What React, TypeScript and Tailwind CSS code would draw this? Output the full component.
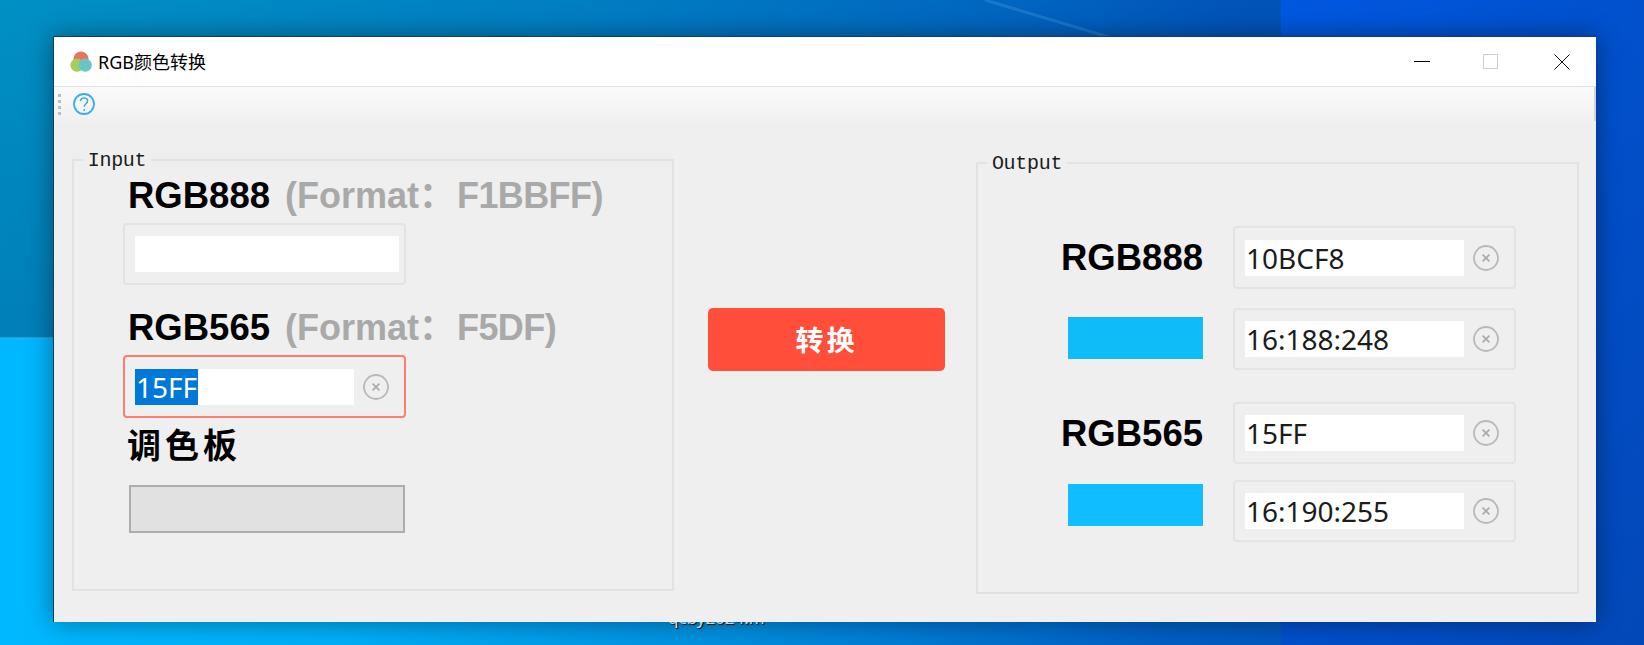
const sans = "font-['Liberation_Sans','Noto_Sans_CJK_SC',sans-serif]";
const ui = "font-['Noto_Sans','Noto_Sans_CJK_SC',sans-serif]";

function Clear() {
  return (
    <svg width="26" height="26" viewBox="0 0 26 26" className="shrink-0" fill="none">
      <circle cx="13" cy="13" r="12" stroke="#b9b9b9" strokeWidth="1.8" />
      <path d="M9.6 9.6l6.8 6.8M16.4 9.6l-6.8 6.8" stroke="#a9a9a9" strokeWidth="1.6" />
    </svg>
  );
}

function Field({
  value,
  clear = true,
  focused = false,
  selected = false,
  className = "",
}: {
  value?: string;
  clear?: boolean;
  focused?: boolean;
  selected?: boolean;
  className?: string;
}) {
  return (
    <div
      className={`flex w-[283px] items-center gap-[9px] rounded-[4px] border-2 pl-[10px] ${
        focused ? "border-[#ff7d70]" : "border-[#e3e3e3]"
      } ${className}`}
    >
      <div
        className={`flex h-[36px] ${clear ? "w-[219px]" : "w-[264px]"} shrink-0 items-center bg-white text-[28px] leading-[36px] text-[#1c1c1c] ${ui}`}
      >
        {selected ? <span className="bg-[#0078d7] pl-[1px] pr-[1px] text-white">{value}</span> : <span className="pl-[1px]">{value}</span>}
      </div>
      {clear && <Clear />}
    </div>
  );
}

function FormatLabel({ name, format }: { name: string; format: string }) {
  return (
    <div className={`ml-[5px] h-[40px] whitespace-nowrap text-[36px] font-bold leading-[40px] ${sans}`}>
      <span className="text-[36.5px] text-black">{name}</span>
      <span className="ml-[15px] text-[#a9a9a9]">
        (Format：<span className="ml-[2px] tracking-[-0.6px]">{format})</span>
      </span>
    </div>
  );
}

function Legend({ text, className }: { text: string; className: string }) {
  return (
    <div
      className={`absolute bg-[#efefef] text-center text-[20px] leading-[22px] tracking-[-0.3px] text-[#1c1c1c] font-['Liberation_Mono',monospace] ${className}`}
    >
      {text}
    </div>
  );
}

function OutLabel({ text, className = "" }: { text: string; className?: string }) {
  return <div className={`text-right text-[36.5px] font-bold leading-[40px] text-black ${sans} ${className}`}>{text}</div>;
}

function Wallpaper() {
  return (
    <svg className="absolute inset-0" width="1644" height="645" viewBox="0 0 1644 645" preserveAspectRatio="none">
      <defs>
        <linearGradient id="a" x1="0" y1="0" x2="1" y2="0.12">
          <stop offset="0" stopColor="#0090c4" />
          <stop offset="0.35" stopColor="#007ec2" />
          <stop offset="0.62" stopColor="#0064c0" />
          <stop offset="0.74" stopColor="#0254b8" />
          <stop offset="1" stopColor="#0348b0" />
        </linearGradient>
        <linearGradient id="d" x1="0" y1="0" x2="0" y2="1">
          <stop offset="0" stopColor="#006ea8" stopOpacity="0" />
          <stop offset="1" stopColor="#006ea8" stopOpacity="0.45" />
        </linearGradient>
        <linearGradient id="b" x1="0" y1="0" x2="1" y2="0">
          <stop offset="0" stopColor="#00b8ff" />
          <stop offset="0.2" stopColor="#00b0f8" />
          <stop offset="0.45" stopColor="#008ede" />
          <stop offset="0.7" stopColor="#0060c4" />
          <stop offset="1" stopColor="#0844ac" />
        </linearGradient>
        <linearGradient id="c" x1="0" y1="0" x2="1" y2="1">
          <stop offset="0" stopColor="#0058e0" />
          <stop offset="1" stopColor="#0348b8" />
        </linearGradient>
      </defs>
      <rect width="1644" height="645" fill="url(#a)" />
      <rect width="60" height="338" fill="url(#d)" />
      <rect y="338" width="1644" height="307" fill="url(#b)" />
      <rect y="337.5" width="60" height="1" fill="#2cbcf0" />
      <rect x="1281" width="363" height="645" fill="url(#c)" />
      <path d="M985 0L1112 38" stroke="#3a8fd6" strokeOpacity="0.45" strokeWidth="3" />
    </svg>
  );
}

function AppIcon() {
  return (
    <svg width="22" height="22" viewBox="0 0 22 22" className="shrink-0">
      <circle cx="11" cy="8" r="7.6" fill="#e8745e" />
      <circle cx="7" cy="14.2" r="6.6" fill="#a6cd58" />
      <circle cx="15.2" cy="14.2" r="6.6" fill="#69c4c9" />
    </svg>
  );
}

function HelpIcon() {
  return (
    <svg width="24" height="24" viewBox="0 0 24 24" fill="none" className="shrink-0">
      <circle cx="12" cy="12" r="10" stroke="#38ade8" strokeWidth="1.8" />
      <path d="M8.4 9.2c.2-2 1.8-3.2 3.6-3.2 2 0 3.6 1.3 3.6 3.1 0 2.6-3.2 2.7-3.4 5.7" stroke="#38ade8" strokeWidth="1.6" />
      <circle cx="12.2" cy="18" r="1.1" fill="#38ade8" />
    </svg>
  );
}

export default function App() {
  return (
    <div className="relative h-[645px] w-[1644px] overflow-hidden">
      <Wallpaper />
      <div className="absolute left-[668px] top-[608px] text-[17px] leading-[20px] text-white [text-shadow:1px_1px_1px_#000] font-['Noto_Sans',sans-serif]">
        qcby2024.m
      </div>
      <div className="relative ml-[53px] flex h-[586px] w-[1543px] translate-y-[36px] flex-col bg-[#efefef] shadow-[0_0_24px_rgba(0,0,0,0.4)] border-l border-t border-[#123f60]">
        <div className="absolute right-0 top-[50px] h-[34px] w-[2px] bg-[#d4d4d4]" />
        <div className="flex h-[49px] shrink-0 items-center bg-white">
          <div className="ml-[16px] flex items-center gap-[6px]">
            <AppIcon />
            <span className={`text-[18px] leading-[24px] text-black ${ui}`}>RGB颜色转换</span>
          </div>
          <div className="ml-auto flex items-center">
            <div className="h-[1px] w-[16px] bg-black" />
            <div className="ml-[53px] h-[15px] w-[15px] border border-[#cfcfcf]" />
            <svg width="16" height="16" viewBox="0 0 16 16" className="ml-[56px] mr-[26px]">
              <path d="M0.5 0.5l15 15M15.5 0.5l-15 15" stroke="#111" strokeWidth="1" />
            </svg>
          </div>
        </div>
        <div className="flex h-[39px] shrink-0 items-center border-t border-[#e2e2e2] bg-gradient-to-b from-[#fbfbfb] to-[#efefef] pb-[4px] pl-[4px]">
          <div className="flex flex-col gap-[3px]">
            <div className="h-[3px] w-[3px] bg-[#bdbdbd]" />
            <div className="h-[3px] w-[3px] bg-[#bdbdbd]" />
            <div className="h-[3px] w-[3px] bg-[#bdbdbd]" />
            <div className="h-[3px] w-[3px] bg-[#bdbdbd]" />
          </div>
          <div className="ml-[11px]">
            <HelpIcon />
          </div>
        </div>
        <div className="flex flex-1 items-start pl-[18px]">
          <div className="relative mt-[34px] h-[432px] w-[602px] shrink-0 border-2 border-[#e2e2e2] pl-[49px] pt-[15px]">
            <Legend text="Input" className="left-[9px] top-[-11px] w-[68px]" />
            <FormatLabel name="RGB888" format="F1BBFF" />
            <Field clear={false} className="mt-[7px] h-[62px]" />
            <div className="mt-[23px]">
              <FormatLabel name="RGB565" format="F5DF" />
            </div>
            <Field value="15FF" focused selected className="mt-[7px] h-[63px]" />
            <div className={`ml-[4px] mt-[6px] text-[34px] font-bold leading-[44px] tracking-[4px] text-black ${sans}`}>调色板</div>
            <div className="ml-[6px] mt-[17px] h-[48px] w-[276px] border-2 border-[#adadad] bg-[#e1e1e1]" />
          </div>
          <button
            className={`ml-[34px] mt-[183px] flex h-[63px] w-[237px] shrink-0 items-center justify-center rounded-[5px] bg-[#ff4f3b] pt-[4px] text-[28px] font-bold tracking-[3px] text-white ${sans}`}
          >
            转换
          </button>
          <div className="relative ml-[31px] mt-[37px] h-[432px] w-[603px] shrink-0 border-2 border-[#e2e2e2] pt-[62px]">
            <Legend text="Output" className="left-[9px] top-[-11px] w-[80px]" />
            <div className="grid grid-cols-[225px_283px] items-center gap-x-[30px]">
              <OutLabel text="RGB888" />
              <Field value="10BCF8" className="h-[63px]" />
              <div className="mt-[17px] flex justify-end">
                <div className="h-[42px] w-[135px] bg-[#10bcf8]" />
              </div>
              <Field value="16:188:248" className="mt-[19px] h-[62px]" />
              <OutLabel text="RGB565" className="mt-[33px]" />
              <Field value="15FF" className="mt-[32px] h-[62px]" />
              <div className="mt-[4px] flex justify-end">
                <div className="h-[42px] w-[135px] bg-[#10beff]" />
              </div>
              <Field value="16:190:255" className="mt-[16px] h-[62px]" />
            </div>
          </div>
        </div>
      </div>
    </div>
  );
}
